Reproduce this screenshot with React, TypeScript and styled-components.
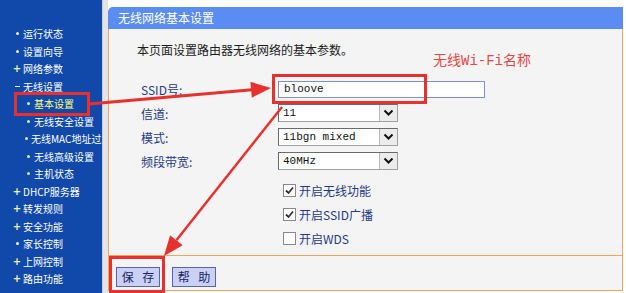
import { Fragment } from 'react'
import styled, { createGlobalStyle } from 'styled-components'

const GlobalStyle = createGlobalStyle`
  html, body {
    margin: 0;
    padding: 0;
    background: #fff;
  }
  body {
    width: 626px;
    height: 293px;
    overflow: hidden;
    font-family: "Noto Sans CJK SC", "DejaVu Sans", sans-serif;
  }
`

const Page = styled.div`
  position: relative;
  display: flex;
  width: 626px;
  height: 293px;
  background: #fff;
`

const Sidebar = styled.nav`
  width: 102px;
  flex-shrink: 0;
  background: #1049a9;
  padding-top: 25px;
  box-sizing: border-box;
  overflow: hidden;
`

const MenuItem = styled.div<{ $sub?: boolean; $active?: boolean }>`
  display: flex;
  align-items: center;
  height: 17.5px;
  padding-left: ${(p) => (p.$sub ? 25 : 14)}px;
  color: ${(p) => (p.$active ? '#ffff80' : '#fff')};
  font-size: 10px;
  white-space: nowrap;
`

const Bullet = styled.span<{ $kind: 'dot' | 'plus' | 'minus' | 'sub' }>`
  display: inline-flex;
  align-items: center;
  justify-content: center;
  width: 6px;
  height: 10px;
  margin-right: 3px;
  color: #f4f0a8;
  font-size: 10px;
  font-weight: bold;
  font-family: "DejaVu Sans", sans-serif;

  &::before {
    content: '';
    display: block;
    width: ${(p) => (p.$kind === 'minus' ? 5 : 3)}px;
    height: ${(p) => (p.$kind === 'minus' ? 1 : 3)}px;
    border-radius: ${(p) => (p.$kind === 'minus' ? 0 : 50)}%;
    background: ${(p) => (p.$kind === 'sub' ? '#d6f0a0' : '#f4f0c0')};
    ${(p) => p.$kind === 'plus' && 'display: none;'}
  }
`

const Gutter = styled.div`
  width: 6px;
  flex-shrink: 0;
  background: #e2e4e8;
  border-left: 1px solid #c8ccd4;
  box-sizing: border-box;
`

const Main = styled.main`
  flex: 1;
  padding: 7px 3px 0 0;
`

const Header = styled.div`
  height: 22px;
  line-height: 22px;
  padding-left: 10px;
  background: #5b8cf2;
  border-top-left-radius: 5px;
  color: #fff;
  font-size: 12px;
`

const Body = styled.section`
  background: #f4f4f4;
  border-left: 1px solid #f3a65a;
  border-right: 1px solid #f3a65a;
  padding: 13px 0 5px 28px;
`

const Intro = styled.p`
  margin: 0;
  font-size: 12px;
  line-height: 16px;
  color: #1c1c1c;
`

const FormGrid = styled.div`
  display: grid;
  grid-template-columns: 137px auto;
  grid-auto-rows: 24px;
  align-items: center;
  margin-top: 19px;
  padding-left: 4px;
`

const Label = styled.span`
  font-size: 12px;
  color: #1f3a86;
`

const TextInput = styled.div`
  width: 207px;
  height: 17px;
  box-sizing: border-box;
  border: 1px solid #7d8fd0;
  background: #fff;
  padding-left: 5px;
  font-family: "Liberation Mono", monospace;
  font-size: 11px;
  line-height: 15px;
  color: #111;
`

const Select = styled.div`
  display: flex;
  width: 120px;
  height: 18px;
  box-sizing: border-box;
  border: 1px solid #a0a0a0;
  border-top-color: #6a6a6a;
  border-left-color: #6a6a6a;
  background: #fff;
`

const SelectValue = styled.span`
  flex: 1;
  padding-left: 4px;
  font-family: "Liberation Mono", monospace;
  font-size: 11px;
  line-height: 16px;
  color: #111;
`

const SelectArrow = styled.span`
  display: flex;
  align-items: center;
  justify-content: center;
  width: 17px;
  background: #ececec;
  border-left: 1px solid #b8b8b8;
`

const Checks = styled.div`
  display: grid;
  grid-auto-rows: 24px;
  align-items: center;
  margin-top: 5px;
  padding-left: 146px;
`

const CheckRow = styled.label`
  display: flex;
  align-items: center;
  gap: 3px;
  font-size: 12px;
  color: #1f3a86;
`

const Box = styled.span`
  display: flex;
  align-items: center;
  justify-content: center;
  width: 13px;
  height: 13px;
  box-sizing: border-box;
  border: 1px solid #8a8a8a;
  background: #fff;
`

const Footer = styled.div`
  display: flex;
  gap: 12px;
  background: #f4f4f4;
  border: 1px solid #f3a65a;
  padding: 11px 0 3px 7px;
`

const Button = styled.button`
  width: 44px;
  height: 20px;
  padding: 0;
  border: 1px solid #5563b0;
  background: #cbd0f7;
  color: #17245e;
  font-family: "Noto Sans CJK SC", sans-serif;
  font-size: 12px;
  line-height: 18px;
  white-space: pre;
  word-spacing: 6px;
`

const Overlay = styled.svg`
  position: absolute;
  left: 0;
  top: 0;
  pointer-events: none;
`

const Note = styled.span`
  position: absolute;
  left: 433px;
  top: 52px;
  color: #e54848;
  font-family: "Liberation Mono", "Noto Sans CJK SC", monospace;
  font-size: 14px;
  line-height: 18px;
`

type Kind = 'dot' | 'plus' | 'minus' | 'sub'

const menu: { label: string; kind: Kind; active?: boolean }[] = [
  { label: '运行状态', kind: 'dot' },
  { label: '设置向导', kind: 'dot' },
  { label: '网络参数', kind: 'plus' },
  { label: '无线设置', kind: 'minus' },
  { label: '基本设置', kind: 'sub', active: true },
  { label: '无线安全设置', kind: 'sub' },
  { label: '无线MAC地址过滤', kind: 'sub' },
  { label: '无线高级设置', kind: 'sub' },
  { label: '主机状态', kind: 'sub' },
  { label: 'DHCP服务器', kind: 'plus' },
  { label: '转发规则', kind: 'plus' },
  { label: '安全功能', kind: 'plus' },
  { label: '家长控制', kind: 'dot' },
  { label: '上网控制', kind: 'plus' },
  { label: '路由功能', kind: 'plus' },
]

const selects = [
  { label: '信道:', value: '11' },
  { label: '模式:', value: '11bgn mixed' },
  { label: '频段带宽:', value: '40MHz' },
]

const checks = [
  { label: '开启无线功能', checked: true },
  { label: '开启SSID广播', checked: true },
  { label: '开启WDS', checked: false },
]

const Chevron = () => (
  <svg width="11" height="8" viewBox="0 0 11 8">
    <path d="M1.5 1.5 L5.5 5.5 L9.5 1.5" fill="none" stroke="#111" strokeWidth="2" />
  </svg>
)

const Tick = () => (
  <svg width="11" height="11" viewBox="0 0 11 11">
    <path d="M2 5.5 L4.5 8 L9 2.5" fill="none" stroke="#333" strokeWidth="1.8" />
  </svg>
)

const RED = '#e8302f'

export default function App() {
  return (
    <Page>
      <GlobalStyle />
      <Sidebar>
        {menu.map((m) => (
          <MenuItem key={m.label} $sub={m.kind === 'sub'} $active={m.active}>
            <Bullet $kind={m.kind}>{m.kind === 'plus' ? '+' : ''}</Bullet>
            {m.label}
          </MenuItem>
        ))}
      </Sidebar>
      <Gutter />
      <Main>
        <Header>无线网络基本设置</Header>
        <Body>
          <Intro>本页面设置路由器无线网络的基本参数。</Intro>
          <FormGrid>
            <Label>SSID号:</Label>
            <TextInput>bloove</TextInput>
            {selects.map((s) => (
              <Fragment key={s.label}>
                <Label>{s.label}</Label>
                <Select>
                  <SelectValue>{s.value}</SelectValue>
                  <SelectArrow>
                    <Chevron />
                  </SelectArrow>
                </Select>
              </Fragment>
            ))}
          </FormGrid>
          <Checks>
            {checks.map((c) => (
              <CheckRow key={c.label}>
                <Box>{c.checked && <Tick />}</Box>
                {c.label}
              </CheckRow>
            ))}
          </Checks>
        </Body>
        <Footer>
          <Button>保 存</Button>
          <Button>帮 助</Button>
        </Footer>
      </Main>

      <Note>无线Wi-Fi名称</Note>
      <Overlay width="626" height="293" viewBox="0 0 626 293">
        <g fill="none" stroke={RED} strokeWidth="3">
          <rect x="15.5" y="93.5" width="73" height="21" />
          <rect x="273.5" y="75.5" width="152" height="27" />
          <rect x="110.5" y="257.5" width="53" height="34" />
          <line x1="89" y1="104" x2="252" y2="89.7" />
          <line x1="282" y1="107" x2="176.4" y2="240.3" strokeWidth="2.5" />
        </g>
        <g fill={RED}>
          <polygon points="271,88 251.8,97.7 250.4,81.8" />
          <polygon points="164,256 182.7,245.3 170.1,235.3" />
        </g>
      </Overlay>
    </Page>
  )
}
